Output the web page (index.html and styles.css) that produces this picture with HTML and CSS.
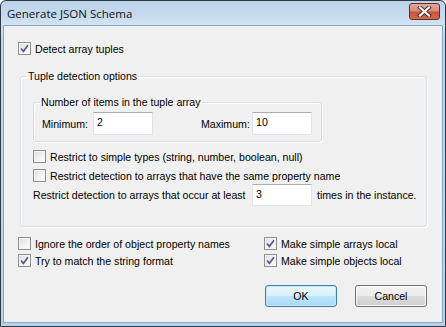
FILE: index.html
```html
<!DOCTYPE html>
<html>
<head>
<meta charset="utf-8">
<link rel="stylesheet" href="styles.css">
</head>
<body>
<div class="window">
  <div class="titlebar">
    <span class="title">Generate JSON Schema</span>
    <span class="close"><svg width="17" height="11" viewBox="0 0 17 11"><path d="M4 1.5 L13 9.5 M13 1.5 L4 9.5" stroke="#4a2a24" stroke-width="4" stroke-linecap="square" fill="none"/><path d="M4 1.5 L13 9.5 M13 1.5 L4 9.5" stroke="#ffffff" stroke-width="2.2" stroke-linecap="square" fill="none"/></svg></span>
  </div>
  <div class="client">
    <label class="check top-check"><span class="box checked"></span>Detect array tuples</label>

    <fieldset class="group outer">
      <legend>Tuple detection options</legend>
      <div class="outer-body">
        <fieldset class="group inner">
          <legend>Number of items in the tuple array</legend>
          <div class="inner-body">
            <span class="lbl">Minimum:</span><span class="field">2</span>
            <span class="lbl lbl-max">Maximum:</span><span class="field">10</span>
          </div>
        </fieldset>
        <label class="check row1"><span class="box"></span>Restrict to simple types (string, number, boolean, null)</label>
        <label class="check row2"><span class="box"></span>Restrict detection to arrays that have the same property name</label>
        <div class="occur">
          <span class="occur-lbl">Restrict detection to arrays that occur at least</span><span class="field">3</span><span class="times">times in the instance.</span>
        </div>
      </div>
    </fieldset>

    <div class="options">
      <label class="check"><span class="box"></span>Ignore the order of object property names</label>
      <label class="check"><span class="box checked"></span>Make simple arrays local</label>
      <label class="check"><span class="box checked"></span>Try to match the string format</label>
      <label class="check"><span class="box checked"></span>Make simple objects local</label>
    </div>

    <div class="buttons">
      <span class="btn default">OK</span>
      <span class="btn">Cancel</span>
    </div>
  </div>
</div>
</body>
</html>
```
FILE: styles.css
```css
html, body {
  margin: 0;
  padding: 0;
  background: #ffffff;
}
body {
  font-family: "Liberation Sans", Arial, sans-serif;
  font-size: 10.6px;
  color: #000;
}
.window {
  box-sizing: border-box;
  width: 446px;
  height: 327px;
  border: 1px solid #2e3a46;
  border-radius: 6px 6px 0 0;
  background: linear-gradient(to bottom, #bcd2ea 0px, #c6daef 14px, #d3e3f3 24px, #bcd6ee 40px, #b7d3ec 100%);
  padding: 0 2px 3px 2px;
  display: flex;
  flex-direction: column;
}
.titlebar {
  height: 24px;
  display: flex;
  align-items: center;
  justify-content: space-between;
  padding: 0 3px 0 4px;
}
.title {
  font-family: "Open Sans", "Noto Sans", sans-serif;
  font-size: 11.5px;
  color: #101010;
}
.close {
  box-sizing: border-box;
  width: 31px;
  height: 17px;
  margin-top: -3px;
  border: 1px solid #6b2a20;
  border-radius: 3px;
  background: linear-gradient(to bottom, #e4a99e 0%, #d88a7b 45%, #c4533d 55%, #cf6a4f 100%);
  display: flex;
  align-items: center;
  justify-content: center;
}
.client {
  flex: 1;
  background: #f0f0f0;
  border: 1px solid #8aa4c0;
  padding: 0;
}
.check {
  display: flex;
  align-items: center;
  height: 13px;
  white-space: nowrap;
}
.box {
  box-sizing: border-box;
  width: 13px;
  height: 13px;
  border: 1px solid #8f8f8f;
  background: linear-gradient(135deg, #dcdcdc 0%, #f4f4f4 60%, #fbfbfb 100%);
  box-shadow: inset 0 0 0 1px #f4f4f4;
  margin-right: 4px;
  flex: none;
  position: relative;
}
.box.checked::after {
  content: "";
  position: absolute;
  left: 1px;
  top: 1px;
  width: 9px;
  height: 9px;
  background: url("data:image/svg+xml;utf8,<svg xmlns='http://www.w3.org/2000/svg' width='9' height='9' viewBox='0 0 9 9'><path d='M1 4.5 L3.4 7.3 L8 1.2' stroke='%234a5d90' stroke-width='1.7' fill='none'/></svg>") no-repeat;
}
.top-check {
  margin: 16px 0 0 14px;
}
.group {
  border: 1px solid #d5dfe5;
  border-radius: 3px;
  padding: 0;
  margin: 0;
  box-shadow: inset 1px 1px 0 #fff, 1px 1px 0 #fff;
}
.group legend {
  padding: 0 1px;
  margin-left: 6px;
  line-height: 13px;
}
.outer {
  margin: 15px 0 0 16px;
  width: 407px;
  box-sizing: border-box;
  height: 157px;
}
.outer-body {
  padding: 13px 0 0 12px;
}
.inner {
  width: 289px;
  box-sizing: border-box;
  height: 46px;
}
.inner-body {
  display: flex;
  align-items: center;
  padding: 3px 0 0 8px;
  white-space: nowrap;
}
.lbl { width: 51px; flex: none; }
.lbl-max { margin-left: 48px; }
.field {
  box-sizing: border-box;
  display: inline-block;
  flex: none;
  width: 60px;
  height: 23px;
  border: 1px solid #e2e3ea;
  border-top-color: #abadb3;
  background: #fff;
  padding: 2px 0 0 3px;
  line-height: 14px;
}
.row1 { margin: 8px 0 0 0; }
.row2 { margin: 6px 0 0 0; }
.occur {
  display: flex;
  align-items: center;
  margin-top: 2px;
  white-space: nowrap;
}
.occur-lbl { width: 219px; flex: none; }
.occur .field { height: 22px; }
.times { margin-left: 5px; }
.options {
  display: grid;
  grid-template-columns: 246px auto;
  row-gap: 4px;
  margin: 10px 0 0 14px;
}
.buttons {
  display: flex;
  justify-content: flex-end;
  gap: 18px;
  margin: 18px 15px 0 0;
}
.btn {
  box-sizing: border-box;
  width: 72px;
  height: 22px;
  border: 1px solid #707070;
  border-radius: 3px;
  background: linear-gradient(to bottom, #f2f2f2 0%, #ebebeb 50%, #dddddd 51%, #cfcfcf 100%);
  box-shadow: inset 0 0 0 1px #fcfcfc;
  display: flex;
  align-items: center;
  justify-content: center;
}
.btn.default {
  border-color: #3c7fb1;
  background: linear-gradient(to bottom, #eaf6fd 0%, #d9f0fc 50%, #bee6fd 51%, #a7d9f5 100%);
  box-shadow: inset 0 0 0 1px #c4e5f6;
}
```
